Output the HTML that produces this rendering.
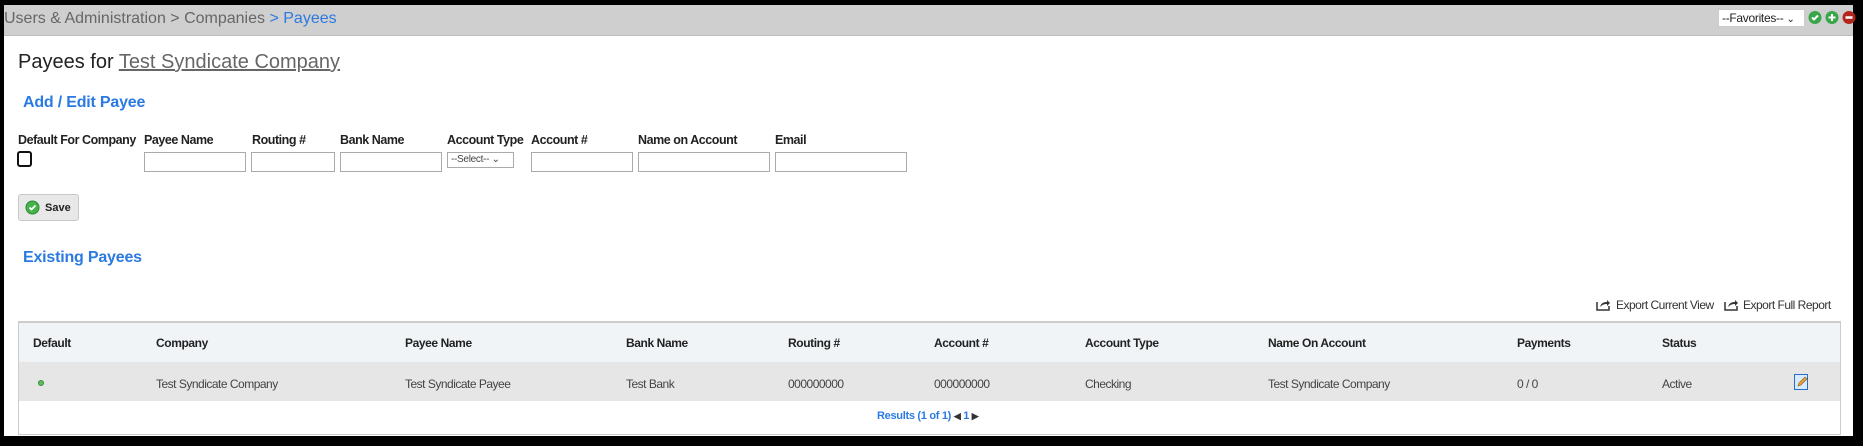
<!DOCTYPE html>
<html><head><style>
*{box-sizing:border-box;margin:0;padding:0}
body{width:1863px;height:446px;background:#000;position:relative;font-family:"Liberation Sans",Arial,sans-serif;overflow:hidden}
.a{position:absolute;white-space:nowrap}
#page{position:absolute;left:4px;top:5px;width:1849px;height:431px;background:#fff}
#bar{position:absolute;width:1849px;height:31px;background:#cfcfcf;border-bottom:1px solid #bdbdbd}
.lbl{font-size:12.5px;font-weight:bold;color:#222;top:133px;letter-spacing:-0.45px}
.inp{position:absolute;top:152px;height:20px;border:1px solid #aaa;background:#fff}
.th{font-size:12px;font-weight:bold;color:#222;top:336px;letter-spacing:-0.4px}
.td{font-size:12px;color:#444;top:377px;letter-spacing:-0.5px}
</style></head><body>
<div id="page"></div>
<div id="bar" style="left:4px;top:5px"></div>
<div class="a" style="left:4px;top:10px;font-size:16px;color:#666">Users &amp; Administration &gt; Companies <span style="color:#2a7ae2">&gt; Payees</span></div>
<div class="a" style="left:1718px;top:9px;width:87px;height:18px;background:#fff;border:1px solid #ccc;font-size:12px;color:#222;padding:1px 3px;letter-spacing:-0.3px">--Favorites-- <span style="font-size:10px">&#8964;</span></div>
<svg class="a" style="left:1808px;top:10px" width="48" height="15">
<circle cx="7" cy="7.5" r="6.5" fill="#3aa64a"/><path d="M4 7.5l2 2 4-4" stroke="#fff" stroke-width="2" fill="none"/>
<circle cx="24" cy="7.5" r="6.5" fill="#3aa64a"/><path d="M24 4v7M20.5 7.5h7" stroke="#fff" stroke-width="2"/>
<circle cx="41" cy="7.5" r="6.5" fill="#b3261e"/><path d="M37.5 7.5h7" stroke="#fff" stroke-width="2.5"/>
</svg>
<div class="a" style="left:18px;top:51px;font-size:20px;color:#222">Payees for <span style="color:#666;text-decoration:underline">Test Syndicate Company</span></div>
<div class="a" style="left:23px;top:94px;font-size:16px;font-weight:bold;color:#2a7ae2;letter-spacing:-0.2px">Add / Edit Payee</div>
<div class="a lbl" style="left:18px">Default For Company</div>
<div class="a lbl" style="left:144px">Payee Name</div>
<div class="a lbl" style="left:252px">Routing #</div>
<div class="a lbl" style="left:340px">Bank Name</div>
<div class="a lbl" style="left:447px">Account Type</div>
<div class="a lbl" style="left:531px">Account #</div>
<div class="a lbl" style="left:638px">Name on Account</div>
<div class="a lbl" style="left:775px">Email</div>
<div class="a" style="left:17px;top:151px;width:15px;height:16px;border:2px solid #111;border-radius:3px"></div>
<div class="inp" style="left:144px;width:102px"></div>
<div class="inp" style="left:251px;width:84px"></div>
<div class="inp" style="left:340px;width:102px"></div>
<div class="inp" style="left:447px;width:67px;height:16px;font-size:10px;color:#444;padding:1px 3px;letter-spacing:-0.3px">--Select-- &#8964;</div>
<div class="inp" style="left:531px;width:102px"></div>
<div class="inp" style="left:638px;width:132px"></div>
<div class="inp" style="left:775px;width:132px"></div>
<div class="a" style="left:18px;top:194px;width:61px;height:27px;background:#e8e8e8;border:1px solid #c8c8c8;border-radius:3px;font-size:11px;font-weight:bold;color:#222;padding:7px 0 0 26px">Save</div>
<svg class="a" style="left:25px;top:200px" width="15" height="15"><circle cx="7.5" cy="7.5" r="6.5" fill="#45b24a" stroke="#2d8a33"/><path d="M4.5 7.5l2 2 4-4" stroke="#fff" stroke-width="1.8" fill="none"/></svg>
<div class="a" style="left:23px;top:249px;font-size:16px;font-weight:bold;color:#2a7ae2;letter-spacing:-0.2px">Existing Payees</div>
<svg class="a" style="left:1596px;top:298px" width="15" height="13"><path d="M1 4v8h12V8" stroke="#333" stroke-width="1.5" fill="none"/><path d="M4 9c1-4 4-5 7-5V2l3 3-3 3V6c-3 0-5 1-7 3z" fill="#333"/></svg>
<div class="a" style="left:1616px;top:298px;font-size:12px;color:#333;letter-spacing:-0.5px">Export Current View</div>
<svg class="a" style="left:1724px;top:298px" width="15" height="13"><path d="M1 4v8h12V8" stroke="#333" stroke-width="1.5" fill="none"/><path d="M4 9c1-4 4-5 7-5V2l3 3-3 3V6c-3 0-5 1-7 3z" fill="#333"/></svg>
<div class="a" style="left:1743px;top:298px;font-size:12px;color:#333;letter-spacing:-0.5px">Export Full Report</div>
<div class="a" style="left:18px;top:321px;width:1823px;height:114px;border:1px solid #ccc;border-top:2px solid #ccc;background:#fff"></div>
<div class="a" style="left:19px;top:323px;width:1821px;height:39px;background:#f1f4f7"></div>
<div class="a" style="left:19px;top:362px;width:1821px;height:39px;background:#e6e6e6"></div>
<div class="a th" style="left:33px">Default</div>
<div class="a th" style="left:156px">Company</div>
<div class="a th" style="left:405px">Payee Name</div>
<div class="a th" style="left:626px">Bank Name</div>
<div class="a th" style="left:788px">Routing #</div>
<div class="a th" style="left:934px">Account #</div>
<div class="a th" style="left:1085px">Account Type</div>
<div class="a th" style="left:1268px">Name On Account</div>
<div class="a th" style="left:1517px">Payments</div>
<div class="a th" style="left:1662px">Status</div>
<div class="a" style="left:38px;top:380px;width:6px;height:6px;border-radius:50%;background:#5cc05c;border:1px solid #3a8a3a"></div>
<div class="a td" style="left:156px">Test Syndicate Company</div>
<div class="a td" style="left:405px">Test Syndicate Payee</div>
<div class="a td" style="left:626px">Test Bank</div>
<div class="a td" style="left:788px">000000000</div>
<div class="a td" style="left:934px">000000000</div>
<div class="a td" style="left:1085px">Checking</div>
<div class="a td" style="left:1268px">Test Syndicate Company</div>
<div class="a td" style="left:1517px">0 / 0</div>
<div class="a td" style="left:1662px">Active</div>
<svg class="a" style="left:1794px;top:374px" width="15" height="16"><rect x="0.5" y="0.5" width="13" height="15" fill="#d8ecff" stroke="#2b6cc4"/><path d="M4 12l1-3 6-6 2 2-6 6z" fill="#e8a23a" stroke="#8a5a10" stroke-width=".6"/></svg>
<div class="a" style="left:877px;top:410px;font-size:11px;font-weight:bold;color:#2a7ae2;letter-spacing:-0.3px">Results (1 of 1) <span style="color:#333;font-size:9px">&#9664;</span> 1 <span style="color:#333;font-size:9px">&#9654;</span></div>
</body></html>
